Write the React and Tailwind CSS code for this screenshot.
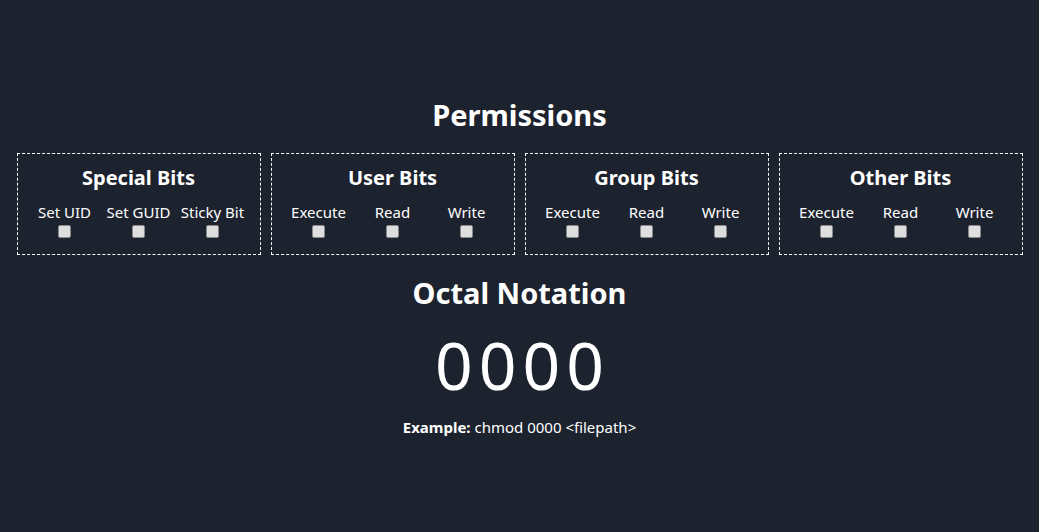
import React from "react";

function Box({ title, labels }) {
  return (
    <div className="w-[244px] h-[102px] border border-dashed border-white flex flex-col items-center pt-[12px]">
      <div className="text-[20px] font-bold leading-[24px]">{title}</div>
      <div className="grid grid-cols-[74px_74px_74px] mt-[13px]">
        {labels.map((l) => (
          <div key={l} className="flex flex-col items-center">
            <div className="text-[15px] leading-[18px] whitespace-nowrap">{l}</div>
            <div className="w-[13px] h-[13px] mt-[4px] bg-[#dedede] border border-[#8a8a8a] rounded-[2px]" />
          </div>
        ))}
      </div>
    </div>
  );
}

export default function App() {
  return (
    <div
      className="w-[1039px] h-[532px] bg-[#1d232e] text-white flex flex-col items-center"
      style={{ fontFamily: '"Trebuchet MS", "Noto Sans", sans-serif' }}
    >
      <div className="text-[29px] font-bold leading-[36px] mt-[97px]">Permissions</div>
      <div className="flex gap-[10px] mt-[20px]">
        <Box title="Special Bits" labels={["Set UID", "Set GUID", "Sticky Bit"]} />
        <Box title="User Bits" labels={["Execute", "Read", "Write"]} />
        <Box title="Group Bits" labels={["Execute", "Read", "Write"]} />
        <Box title="Other Bits" labels={["Execute", "Read", "Write"]} />
      </div>
      <div className="text-[29px] font-bold leading-[36px] mt-[20px]">Octal Notation</div>
      <div className="text-[66px] leading-[66px] tracking-[6px] mt-[20px] pl-[6px]">0000</div>
      <div className="text-[15px] leading-[18px] mt-[21px]">
        <span className="font-bold">Example:</span> chmod 0000 &lt;filepath&gt;
      </div>
    </div>
  );
}
